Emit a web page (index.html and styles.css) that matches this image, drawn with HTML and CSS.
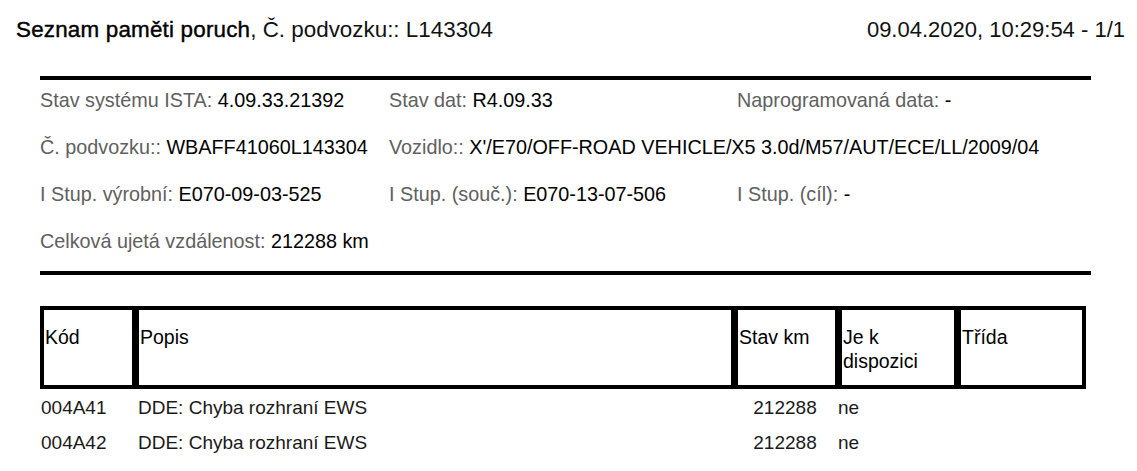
FILE: index.html
```html
<!DOCTYPE html>
<html lang="cs">
<head>
<meta charset="utf-8">
<title>Seznam paměti poruch</title>
<link rel="stylesheet" href="styles.css">
</head>
<body>
<header class="page-head">
  <div class="title"><span class="title-main">Seznam paměti poruch</span>, Č. podvozku:: L143304</div>
  <div class="stamp">09.04.2020, 10:29:54 - 1/1</div>
</header>

<section class="info">
  <div class="info-row">
    <div class="field"><span class="lbl">Stav systému ISTA:</span> <span class="val">4.09.33.21392</span></div>
    <div class="field"><span class="lbl">Stav dat:</span> <span class="val">R4.09.33</span></div>
    <div class="field"><span class="lbl">Naprogramovaná data:</span> <span class="val">-</span></div>
  </div>
  <div class="info-row">
    <div class="field"><span class="lbl">Č. podvozku::</span> <span class="val">WBAFF41060L143304</span></div>
    <div class="field"><span class="lbl">Vozidlo::</span> <span class="val">X'/E70/OFF-ROAD VEHICLE/X5 3.0d/M57/AUT/ECE/LL/2009/04</span></div>
  </div>
  <div class="info-row">
    <div class="field"><span class="lbl">I Stup. výrobní:</span> <span class="val">E070-09-03-525</span></div>
    <div class="field"><span class="lbl">I Stup. (souč.):</span> <span class="val">E070-13-07-506</span></div>
    <div class="field"><span class="lbl">I Stup. (cíl):</span> <span class="val">-</span></div>
  </div>
  <div class="info-row">
    <div class="field"><span class="lbl">Celková ujetá vzdálenost:</span> <span class="val">212288 km</span></div>
  </div>
</section>

<table class="faults">
  <thead>
    <tr>
      <th class="c-code">Kód</th>
      <th class="c-desc">Popis</th>
      <th class="c-km">Stav km</th>
      <th class="c-avail">Je k<br>dispozici</th>
      <th class="c-class">Třída</th>
    </tr>
  </thead>
  <tbody>
    <tr>
      <td class="d-code">004A41</td>
      <td class="d-desc">DDE: Chyba rozhraní EWS</td>
      <td class="d-km">212288</td>
      <td class="d-avail">ne</td>
      <td></td>
    </tr>
    <tr>
      <td class="d-code">004A42</td>
      <td class="d-desc">DDE: Chyba rozhraní EWS</td>
      <td class="d-km">212288</td>
      <td class="d-avail">ne</td>
      <td></td>
    </tr>
  </tbody>
</table>
</body>
</html>
```

FILE: styles.css
```css
html, body {
  margin: 0;
  padding: 0;
  background: #ffffff;
}

body {
  font-family: "Liberation Sans", Arial, sans-serif;
  color: #000;
  width: 1137px;
}

.page-head {
  display: flex;
  justify-content: space-between;
  align-items: baseline;
  padding: 17px 12px 0 16px;
  height: 26px;
  font-size: 22px;
  line-height: 26px;
  color: #111;
}

.title {
  font-size: 22.4px;
}

.title-main {
  color: #000;
  -webkit-text-stroke: 0.4px #000;
  letter-spacing: 0.2px;
}

.info {
  margin: 33px 0 0 40px;
  width: 1051px;
  border-top: 4px solid #000;
  border-bottom: 4px solid #000;
  padding: 8px 0 18px 0;
  display: flex;
  flex-direction: column;
  gap: 23px;
  font-size: 19.8px;
  line-height: 24px;
}

.info-row {
  display: grid;
  grid-template-columns: 349px 348px 1fr;
  white-space: nowrap;
}

.lbl {
  color: #606060;
}

.val {
  color: #000;
}

.faults {
  margin: 31px 0 0 40px;
  width: 1046px;
  border-collapse: separate;
  border-spacing: 0;
  table-layout: fixed;
  font-size: 19.5px;
  line-height: 24px;
}

.faults th {
  box-sizing: border-box;
  height: 83px;
  padding: 15px 0 0 1px;
  vertical-align: top;
  text-align: left;
  font-weight: normal;
  color: #000;
  border-top: 4px solid #000;
  border-bottom: 4px solid #000;
  border-left: 7px solid #000;
}

.faults th.c-code {
  width: 92px;
  border-left-width: 4px;
}

.faults th.c-desc { width: 599px; }
.faults th.c-km { width: 104px; }
.faults th.c-avail { width: 119px; }

.faults th.c-class {
  width: 132px;
  border-right: 4px solid #000;
}

.faults td {
  box-sizing: border-box;
  height: 35px;
  padding: 7px 0 4px 0;
  vertical-align: top;
  font-size: 19px;
  color: #1a1a1a;
  white-space: nowrap;
}

.faults td.d-code { padding-left: 1px; }
.faults td.d-desc { padding-left: 6px; }
.faults td.d-km { text-align: center; padding-left: 4px; }
.faults td.d-avail { padding-left: 3px; }
```
